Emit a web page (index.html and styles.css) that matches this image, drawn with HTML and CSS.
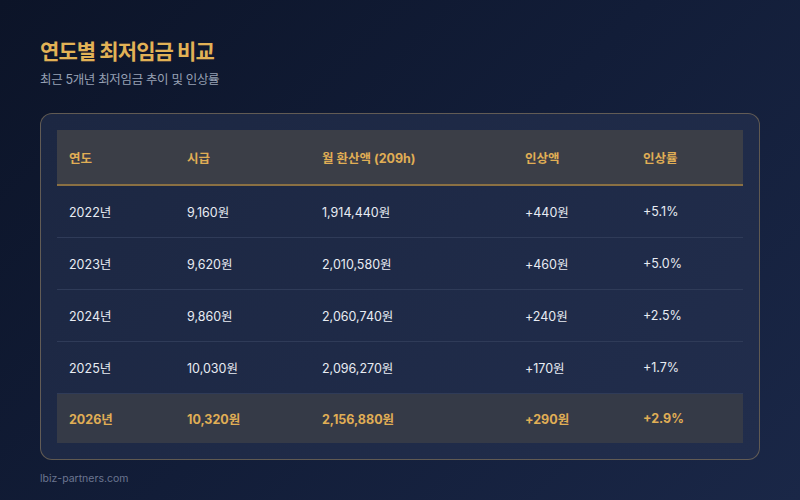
FILE: index.html
```html
<!DOCTYPE html>
<html lang="ko">
<head>
<meta charset="utf-8">
<link rel="stylesheet" href="styles.css">
</head>
<body>
<main class="page">
  <h1 class="title">연도별 최저임금 비교</h1>
  <p class="subtitle">최근 5개년 최저임금 추이 및 인상률</p>
  <section class="card">
    <table class="wage-table">
      <colgroup>
        <col class="c1"><col class="c2"><col class="c3"><col class="c4"><col class="c5">
      </colgroup>
      <thead>
        <tr><th>연도</th><th>시급</th><th>월 환산액 (209h)</th><th>인상액</th><th>인상률</th></tr>
      </thead>
      <tbody>
        <tr><td>2022년</td><td>9,160원</td><td>1,914,440원</td><td>+440원</td><td>+5.1%</td></tr>
        <tr><td>2023년</td><td>9,620원</td><td>2,010,580원</td><td>+460원</td><td>+5.0%</td></tr>
        <tr><td>2024년</td><td>9,860원</td><td>2,060,740원</td><td>+240원</td><td>+2.5%</td></tr>
        <tr><td>2025년</td><td>10,030원</td><td>2,096,270원</td><td>+170원</td><td>+1.7%</td></tr>
        <tr class="current"><td>2026년</td><td>10,320원</td><td>2,156,880원</td><td>+290원</td><td>+2.9%</td></tr>
      </tbody>
    </table>
  </section>
  <footer class="footer">lbiz-partners.com</footer>
</main>
</body>
</html>
```
FILE: styles.css
```css
html, body {
  margin: 0;
  height: 100%;
}
body {
  background: linear-gradient(135deg, #0c1428 0%, #121d38 50%, #1a2747 100%);
  font-family: "Inter", "Noto Sans CJK KR", sans-serif;
  color: #e8ecf3;
}
.page {
  padding: 38px 40px 0 40px;
}
.title {
  margin: 0;
  font-size: 21px;
  line-height: 28px;
  font-weight: 700;
  color: #e2b256;
  letter-spacing: -0.9px;
}
.subtitle {
  margin: 5px 0 0 0;
  font-size: 12.5px;
  line-height: 18px;
  color: #97a1b4;
  letter-spacing: -0.35px;
}
.card {
  margin-top: 24px;
  padding: 16px;
  border: 1px solid rgba(180, 150, 100, 0.45);
  border-radius: 12px;
  background: linear-gradient(135deg, #1c2742 0%, #212d4c 100%);
}
.wage-table {
  width: 100%;
  border-collapse: collapse;
  table-layout: fixed;
  font-size: 12.5px;
}
.c1 { width: 118px; }
.c2 { width: 135px; }
.c3 { width: 203px; }
.c4 { width: 118px; }
.c5 { width: 112px; }
.wage-table th {
  height: 54px;
  padding: 0 12px;
  text-align: left;
  font-weight: 700;
  color: #e0ae55;
  background: #3b3e47;
  border-bottom: 2px solid #8a7043;
}
.wage-table td {
  height: 51px;
  padding: 0 12px;
  border-bottom: 1px solid #2f3b58;
  color: #e8ecf3;
}
.wage-table tbody tr:last-child td {
  border-bottom: none;
}
.wage-table tr.current td {
  height: 49px;
  font-weight: 700;
  color: #e0ae55;
  background: #353a47;
  border-top: 1px solid #424858;
}
.footer {
  margin-top: 11px;
  font-size: 10.5px;
  line-height: 15px;
  color: #6b7590;
}
```
